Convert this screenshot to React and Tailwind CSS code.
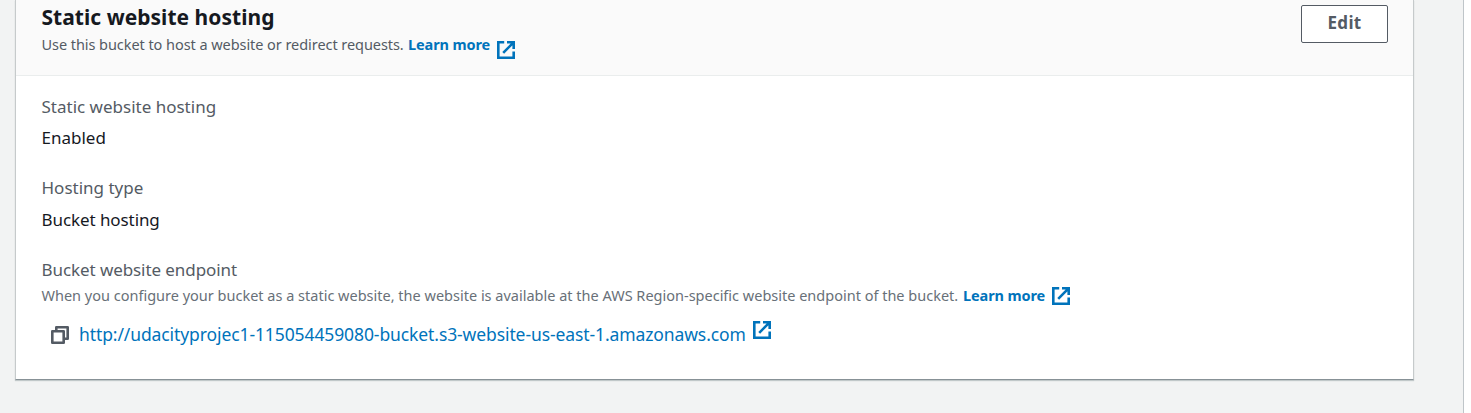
function ExternalIcon({ className }) {
  return (
    <svg viewBox="0 0 18 18" className={`h-[18px] w-[18px] shrink-0 ${className}`} fill="none" stroke="#0073bb" strokeWidth="2.6">
      <path d="M7.2 1.3H1.3v15.4h15.4V10.6" />
      <path d="M10 1.3h6.7V8M16.3 1.7 6.2 11.8" />
    </svg>
  );
}

function CopyIcon() {
  return (
    <svg viewBox="0 0 18 18" className="ml-[9.5px] mt-[9px] h-[18px] w-[18px] shrink-0" fill="none" stroke="#545b64" strokeWidth="2.6" strokeLinejoin="round">
      <path d="M1.3 5.3h11.4v11.4H1.3z" />
      <path d="M5.3 5V1.3h11.4v11.4H13" />
    </svg>
  );
}

function Field({ label, value, valueClass }) {
  return (
    <div className="flex flex-col">
      <div className="h-[31px] text-[17px] leading-[31px] text-[#545b64]">{label}</div>
      <div className={`text-[17px] text-[#16191f] ${valueClass}`}>{value}</div>
    </div>
  );
}

export default function App() {
  return (
    <div className="flex h-[413px] w-[1471px] overflow-hidden whitespace-nowrap bg-white font-['Noto_Sans',sans-serif]">
      <div className="h-[413px] w-[1464px] border-r border-[#bfc5c9] bg-[#f2f3f3] pl-[15px]">
        <section className="flex h-[380px] w-[1399px] flex-col border-x border-b border-x-[#c6cacb] border-b-[#879196] bg-white shadow-[0_1px_1px_0_rgba(0,28,36,0.2)]">
          <header className="flex h-[76px] shrink-0 justify-between border-b border-[#eaeded] bg-[#fafafa] pl-[25.5px] pr-[25px]">
            <div className="flex flex-col">
              <h2 className="h-[34px] text-[21px] font-bold leading-[34px] tracking-[0.03px] text-[#16191f]">Static website hosting</h2>
              <div className="flex h-[22px] text-[14.5px] leading-[20px]">
                <span className="w-[366.5px] tracking-[-0.06px] text-[#545b64]">Use this bucket to host a website or redirect requests.</span>
                <a className="w-[89px] font-bold tracking-[-0.1px] text-[#0073bb]">Learn more</a>
                <ExternalIcon className="mt-[7px]" />
              </div>
            </div>
            <button className="mt-[5px] h-[38px] w-[87px] rounded-[2px] border border-[#545b64] bg-white text-[17px] font-bold leading-[34px] tracking-[0.3px] text-[#545b64]"><span className="block h-[36px]">Edit</span></button>
          </header>
          <div className="flex flex-col pl-[25.5px] pt-[15px]">
            <Field label="Static website hosting" value="Enabled" valueClass="h-[32px] leading-[32px]" />
            <div className="h-[18px]" />
            <Field label="Hosting type" value="Bucket hosting" valueClass="h-[33px] leading-[34px] tracking-[-0.08px]" />
            <div className="h-[18px]" />
            <div className="h-[31px] text-[17px] leading-[31px] tracking-[-0.08px] text-[#545b64]">Bucket website endpoint</div>
            <div className="flex h-[22px] text-[14.5px] leading-[20px]">
              <span className="w-[921.5px] text-[#687078]">When you configure your bucket as a static website, the website is available at the AWS Region-specific website endpoint of the bucket.</span>
              <a className="w-[89px] font-bold tracking-[-0.1px] text-[#0073bb]">Learn more</a>
              <ExternalIcon className="mt-[2px]" />
            </div>
            <div className="mt-[10px] flex h-[34px]">
              <CopyIcon />
              <a className="ml-[10px] w-[674px] text-[17.5px] leading-[34px] tracking-[-0.1px] text-[#0073bb]">http://udacityprojec1-115054459080-bucket.s3-website-us-east-1.amazonaws.com</a>
              <ExternalIcon className="mt-[4px]" />
            </div>
          </div>
        </section>
      </div>
    </div>
  );
}
